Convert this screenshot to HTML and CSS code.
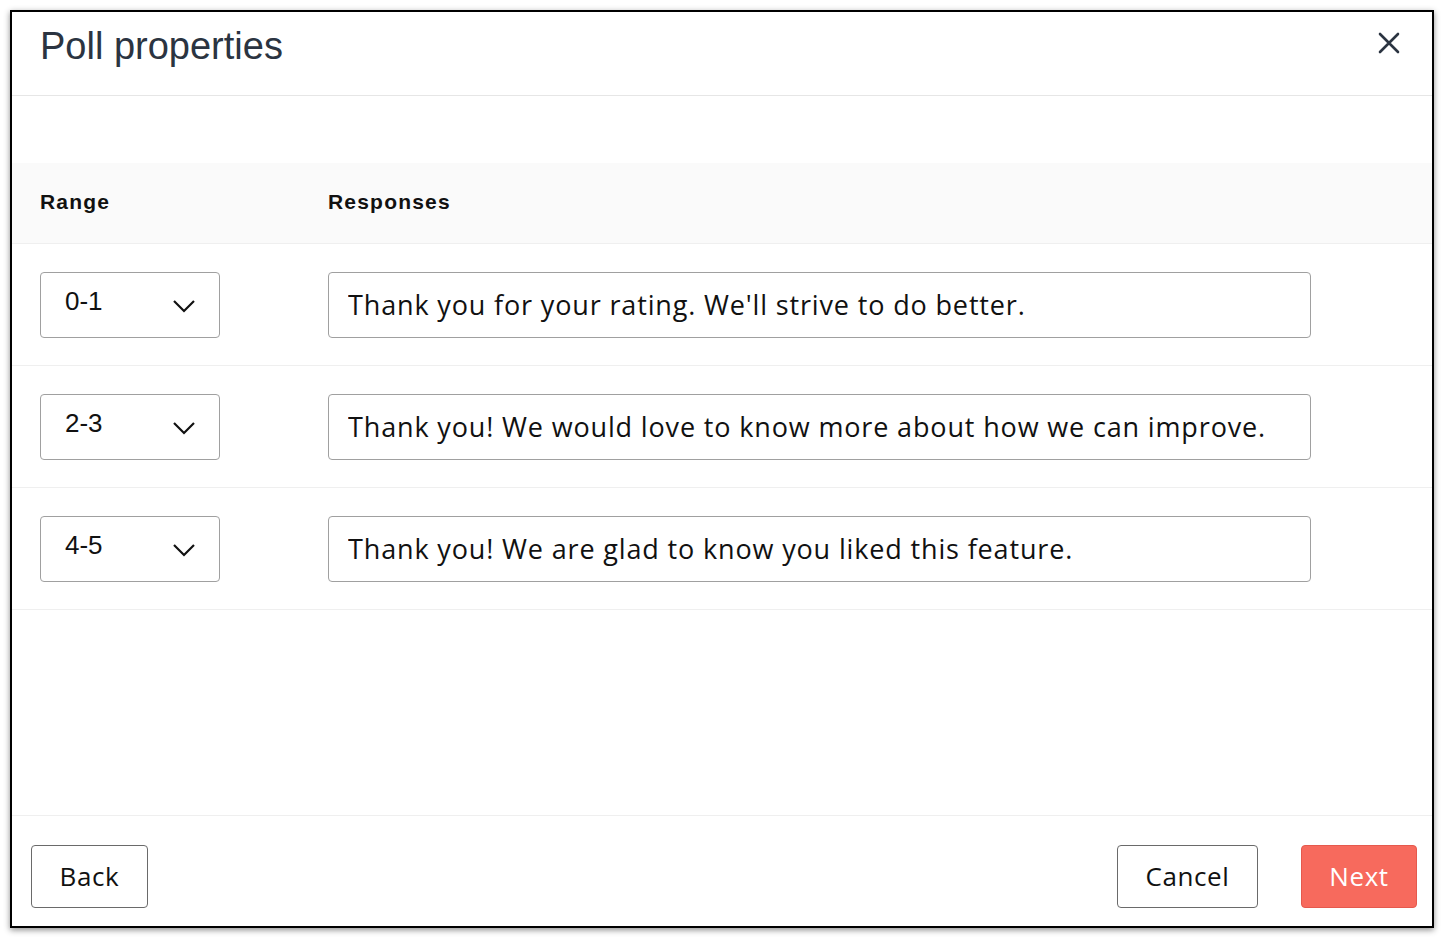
FILE: index.html
```html
<!DOCTYPE html>
<html lang="en">
<head>
    <meta charset="UTF-8">
    <meta name="viewport" content="width=device-width, initial-scale=1.0">
    <title>Poll properties</title>
    <link rel="stylesheet" href="styles.css">
</head>
<body>

    <div class="modal">
        <div class="modal-header">
            <h2>Poll properties</h2>
            <button class="close-btn" aria-label="Close">
                <svg width="22" height="22" viewBox="0 0 22 22">
                    <path d="M2 2 L20 20 M20 2 L2 20" stroke="#2b3441" stroke-width="2.6" stroke-linecap="round" fill="none"/>
                </svg>
            </button>
        </div>

        <div class="modal-body">
            <div class="table-head">
                <div class="col-range">Range</div>
                <div class="col-response">Responses</div>
            </div>

            <div class="table-row">
                <div class="col-range">
                    <div class="select">
                        <span>0-1</span>
                        <svg class="chevron" width="24" height="14" viewBox="0 0 24 14"><path d="M2 2 L12 12 L22 2" stroke="#111" stroke-width="2.2" fill="none"/></svg>
                    </div>
                </div>
                <div class="col-response">
                    <input class="response-input" type="text" value="Thank you for your rating. We'll strive to do better.">
                </div>
            </div>

            <div class="table-row">
                <div class="col-range">
                    <div class="select">
                        <span>2-3</span>
                        <svg class="chevron" width="24" height="14" viewBox="0 0 24 14"><path d="M2 2 L12 12 L22 2" stroke="#111" stroke-width="2.2" fill="none"/></svg>
                    </div>
                </div>
                <div class="col-response">
                    <input class="response-input" type="text" value="Thank you! We would love to know more about how we can improve.">
                </div>
            </div>

            <div class="table-row">
                <div class="col-range">
                    <div class="select">
                        <span>4-5</span>
                        <svg class="chevron" width="24" height="14" viewBox="0 0 24 14"><path d="M2 2 L12 12 L22 2" stroke="#111" stroke-width="2.2" fill="none"/></svg>
                    </div>
                </div>
                <div class="col-response">
                    <input class="response-input" type="text" value="Thank you! We are glad to know you liked this feature.">
                </div>
            </div>
        </div>

        <div class="modal-footer">
            <button class="btn">Back</button>
            <div class="footer-right">
                <button class="btn btn-cancel">Cancel</button>
                <button class="btn btn-primary">Next</button>
            </div>
        </div>
    </div>

</body>
</html>
```

FILE: styles.css
```css
/* Сброс */
* {
    margin: 0;
    padding: 0;
    box-sizing: border-box;
}

body {
    background-color: #fff;
    font-family: "Open Sans", Arial, sans-serif;
    color: #111;
}

/* Окно */
.modal {
    margin: 10px;
    width: 1424px;
    height: 918px;
    border: 2px solid #000;
    background-color: #fff;
    box-shadow: 0 2px 6px rgba(0, 0, 0, 0.45);
    display: flex;
    flex-direction: column;
}

.modal-header {
    height: 84px;
    padding: 0 28px;
    display: flex;
    justify-content: space-between;
    align-items: flex-start;
    border-bottom: 1px solid #e6e6e6;
}

.modal-header h2 {
    font-family: "Liberation Sans", Arial, sans-serif;
    font-weight: normal;
    font-size: 38px;
    line-height: 1;
    color: #2b3441;
    margin-top: 15px;
}

.close-btn {
    background: none;
    border: none;
    margin-top: 20px;
    margin-right: 4px;
    cursor: pointer;
}

/* Таблица */
.modal-body {
    flex: 1;
    padding-top: 67px;
}

.table-head,
.table-row {
    display: flex;
    align-items: center;
    padding-left: 28px;
}

.table-head {
    height: 81px;
    padding-bottom: 2px;
    background-color: #fafafa;
    border-bottom: 1px solid #efefef;
    font-family: "Liberation Sans", Arial, sans-serif;
    font-weight: bold;
    font-size: 21px;
    letter-spacing: 1.2px;
    color: #111;
}

.table-row {
    height: 122px;
    border-bottom: 1px solid #efefef;
}

.col-range {
    width: 288px;
}

.col-response {
    width: 983px;
}

.select {
    width: 180px;
    height: 66px;
    border: 1px solid #a0a0a0;
    border-radius: 4px;
    display: flex;
    align-items: center;
    justify-content: space-between;
    padding: 0 23px 0 24px;
}

.select span {
    font-family: "Liberation Sans", Arial, sans-serif;
    font-size: 26px;
    margin-top: -6px;
    color: #111;
}

.chevron {
    margin-top: 2px;
}

.response-input {
    width: 983px;
    height: 66px;
    border: 1px solid #a0a0a0;
    border-radius: 4px;
    padding: 0 19px 1px;
    font-family: "Open Sans", Arial, sans-serif;
    font-size: 27px;
    letter-spacing: 0.85px;
    color: #111;
    outline: none;
    background: #fff;
}

/* Низ */
.modal-footer {
    border-top: 1px solid #efefef;
    height: 111px;
    padding: 29px 15px 0 19px;
    display: flex;
    justify-content: space-between;
    align-items: flex-start;
}

.footer-right {
    display: flex;
    gap: 43px;
}

.btn {
    height: 63px;
    width: 117px;
    border: 1px solid #6a6a6a;
    border-radius: 4px;
    background-color: #fff;
    font-family: "Open Sans", Arial, sans-serif;
    font-size: 26px;
    letter-spacing: 0.6px;
    color: #111;
    padding-bottom: 2px;
    cursor: pointer;
}

.btn-cancel {
    width: 141px;
}

.btn-primary {
    width: 116px;
    background-color: #f76a5d;
    border-color: #e5594d;
    color: #fff;
}
```
